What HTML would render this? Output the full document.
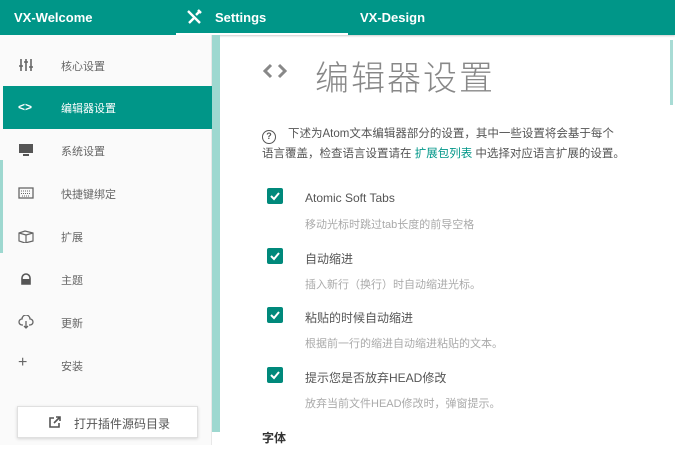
<!DOCTYPE html>
<html><head><meta charset="utf-8"><style>
*{margin:0;padding:0;box-sizing:border-box}
body{width:675px;height:449px;overflow:hidden;background:#fff;font-family:"Liberation Sans","Noto Sans CJK SC",sans-serif;position:relative}
.hdr{position:absolute;left:0;top:0;width:675px;height:35px;background:#009688;color:#fff;font-size:13px;box-shadow:0 1px 2px rgba(0,0,0,.2)}
.hdr span{position:absolute;top:10px;font-weight:bold}
.ul{position:absolute;left:176px;top:33px;width:172px;height:2px;background:#fff}
.side{position:absolute;left:0;top:35px;width:212px;height:410px;background:#fafafa;border-right:1px solid #e8e8e8}
.strip{position:absolute;left:0;top:125px;width:3px;height:93px;background:#9ed8d0}
.col{position:absolute;left:212px;top:35px;width:8px;height:397px;background:#9ed8d0}
.it{position:absolute;left:3px;width:209px;height:43px;font-size:11px;color:#666}
.it .t{position:absolute;left:58px;top:14px}
.it .i{position:absolute;left:15px;top:14px;width:16px;height:14px;color:#666;font-size:12px}
.act{background:#009688;color:#fff}
.act .i{color:#fff}
.btn{position:absolute;left:17px;top:406px;width:181px;height:32px;background:#fff;border:1px solid #e0e0e0;box-shadow:0 1px 3px rgba(0,0,0,.15);font-size:12px;color:#555}
.ct{position:absolute;left:220px;top:35px;right:0;bottom:0}
.title{position:absolute;left:95px;top:16px;font-size:34px;color:#888;font-weight:300;letter-spacing:2px}
.desc{position:absolute;left:42px;top:89px;font-size:11.5px;color:#555;line-height:20px;width:370px}
.desc a{color:#009688;text-decoration:none}
.cb{position:absolute;left:47px;width:16px;height:16px;background:#00897b;border-radius:2px}
.lb{position:absolute;left:85px;font-size:12px;color:#555}
.sb{position:absolute;left:85px;font-size:11px;color:#aaa}
.scr{position:absolute;left:450px;top:5px;width:3px;height:65px;background:#a8dcd5}
</style></head><body>
<div class="hdr">
<span style="left:14px">VX-Welcome</span>
<svg style="position:absolute;left:186px;top:9px" width="16" height="16" viewBox="0 0 16 16"><path d="M2 2l12 12M3 14l5-5M10 6l3-3M12 1l3 3" stroke="#fff" stroke-width="2.4" fill="none"/></svg>
<span style="left:215px">Settings</span>
<span style="left:360px">VX-Design</span>
<div class="ul"></div>
</div>
<div class="side">
<div class="strip"></div>
<div class="it" style="top:9px"><svg class="i" viewBox="0 0 16 14"><path d="M3 1v12M8 1v12M13 1v12M1 8h4M6 4h4M11 9h4" stroke="#666" stroke-width="1.6"/></svg><span class="t">核心设置</span></div>
<div class="it act" style="top:51px"><span class="i" style="font-weight:bold">&lt;&gt;</span><span class="t">编辑器设置</span></div>
<div class="it" style="top:94px"><svg class="i" viewBox="0 0 16 14"><rect x="1" y="1" width="14" height="9" fill="#555"/><rect x="5" y="11" width="6" height="2" fill="#555"/></svg><span class="t">系统设置</span></div>
<div class="it" style="top:137px"><svg class="i" viewBox="0 0 16 14"><rect x="1" y="2" width="14" height="10" fill="none" stroke="#666" stroke-width="1.3"/><path d="M3 5h10M3 7.5h10M4 10h8" stroke="#666" stroke-dasharray="1 1"/></svg><span class="t">快捷键绑定</span></div>
<div class="it" style="top:180px"><svg class="i" viewBox="0 0 16 14"><path d="M1 4l6-2 8 2v8l-8 2-6-2z M1 4l7 2 7-2M8 6v8" fill="none" stroke="#666" stroke-width="1.2"/></svg><span class="t">扩展</span></div>
<div class="it" style="top:223px"><svg class="i" viewBox="0 0 16 14"><path d="M4 6a4 4 0 0 1 8 0v6H4z" fill="none" stroke="#555" stroke-width="1.6"/><rect x="4" y="7" width="8" height="5" fill="#555"/></svg><span class="t">主题</span></div>
<div class="it" style="top:266px"><svg class="i" viewBox="0 0 16 14"><path d="M5 10H4a3 3 0 0 1 0-6 4 4 0 0 1 8 0 3 3 0 0 1 0 6h-1M8 6v7M6 11l2 2 2-2" fill="none" stroke="#666" stroke-width="1.3"/></svg><span class="t">更新</span></div>
<div class="it" style="top:309px"><span class="i" style="font-size:16px;top:10px">+</span><span class="t">安装</span></div>
</div>
<div class="col"></div>
<div class="btn"><svg style="position:absolute;left:30px;top:9px" width="13" height="13" viewBox="0 0 13 13"><path d="M6 2H2v9h9V7M8 1h4v4M12 1L6 7" fill="none" stroke="#555" stroke-width="1.6"/></svg><span style="position:absolute;left:56px;top:8px">打开插件源码目录</span></div>
<div class="ct">
<div class="scr"></div>
<svg style="position:absolute;left:43px;top:28px" width="24" height="16" viewBox="0 0 24 16"><path d="M8 2L2 8l6 6M16 2l6 6-6 6" fill="none" stroke="#888" stroke-width="3"/></svg>
<div class="title">编辑器设置</div>
<div class="desc"><span style="display:inline-block;width:14px;height:14px;border:1.5px solid #555;border-radius:50%;font-size:9px;text-align:center;line-height:11px;font-weight:bold;vertical-align:-2px;margin-right:12px">?</span>下述为Atom文本编辑器部分的设置，其中一些设置将会基于每个<br>语言覆盖，检查语言设置请在 <a>扩展包列表</a> 中选择对应语言扩展的设置。</div>
<div class="cb" style="top:153px"><svg width="16" height="16"><path d="M4 8l3 3 5-6" stroke="#fff" stroke-width="2" fill="none"/></svg></div>
<div class="lb" style="top:156px">Atomic Soft Tabs</div><div class="sb" style="top:181px">移动光标时跳过tab长度的前导空格</div>
<div class="cb" style="top:213px"><svg width="16" height="16"><path d="M4 8l3 3 5-6" stroke="#fff" stroke-width="2" fill="none"/></svg></div>
<div class="lb" style="top:215px">自动缩进</div><div class="sb" style="top:241px">插入新行（换行）时自动缩进光标。</div>
<div class="cb" style="top:272px"><svg width="16" height="16"><path d="M4 8l3 3 5-6" stroke="#fff" stroke-width="2" fill="none"/></svg></div>
<div class="lb" style="top:274px">粘贴的时候自动缩进</div><div class="sb" style="top:300px">根据前一行的缩进自动缩进粘贴的文本。</div>
<div class="cb" style="top:332px"><svg width="16" height="16"><path d="M4 8l3 3 5-6" stroke="#fff" stroke-width="2" fill="none"/></svg></div>
<div class="lb" style="top:334px">提示您是否放弃HEAD修改</div><div class="sb" style="top:360px">放弃当前文件HEAD修改时，弹窗提示。</div>
<div style="position:absolute;left:42px;top:394px;font-size:12px;color:#333;font-weight:bold">字体</div>
</div>
</body></html>
